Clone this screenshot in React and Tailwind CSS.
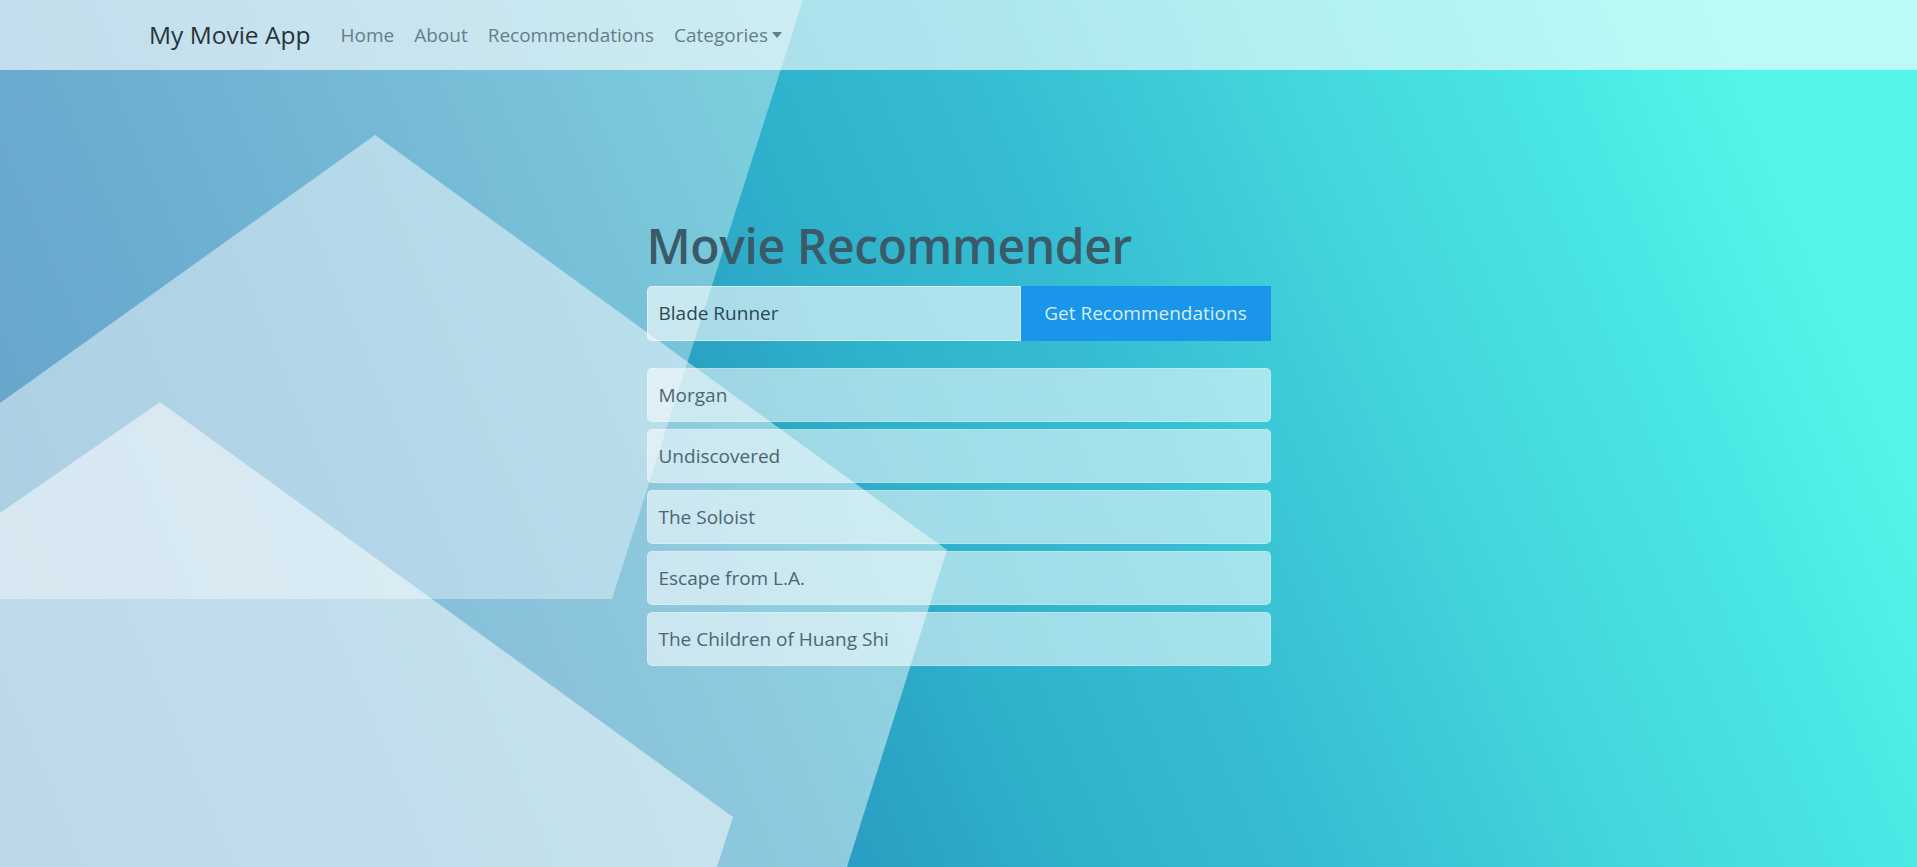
export default function App() {
  const items = [
    "Morgan",
    "Undiscovered",
    "The Soloist",
    "Escape from L.A.",
    "The Children of Huang Shi",
  ];
  return (
    <div className="relative min-h-[867px] w-full overflow-hidden font-['Open_Sans',sans-serif] bg-[linear-gradient(67deg,#0a6aa8_0%,#147db4_17%,#2997bf_34%,#2fb3cc_48%,#35bcd2_57%,#44d8dc_72%,#4ae8e4_83%,#55f5ea_91%,#55f5ea_100%)]">
      <svg
        className="absolute inset-0 h-full w-full"
        viewBox="0 0 1917 867"
        preserveAspectRatio="none"
        aria-hidden="true"
      >
        <polygon points="0,0 803,0 612,599 0,599" fill="#fff" fillOpacity="0.37" />
        <polygon points="375,135 947,550 847,867 0,867 0,403" fill="#fff" fillOpacity="0.47" />
        <polygon points="160,402 733,817 717,867 0,867 0,513" fill="#fff" fillOpacity="0.5" />
      </svg>

      <nav className="relative flex h-[70px] items-center bg-white/60 pl-[149px]">
        <span className="mr-[20px] text-[24.5px] leading-none text-[#27343b]">My Movie App</span>
        <div className="flex items-center text-[19px] text-[#667d88]">
          <span className="px-[10px]">Home</span>
          <span className="px-[10px]">About</span>
          <span className="px-[10px]">Recommendations</span>
          <span className="flex items-center px-[10px]">
            Categories
            <span className="ml-[4px] inline-block h-0 w-0 border-x-[5px] border-t-[6px] border-x-transparent border-t-[#667d88]" />
          </span>
        </div>
      </nav>

      <main className="relative mx-auto flex w-[624px] flex-col pt-[147px]">
        <h1 className="mb-[11px] text-[48px] font-semibold leading-[58px] tracking-[-0.4px] text-[#3b5a68]">
          Movie Recommender
        </h1>
        <div className="flex h-[55px]">
          <div className="flex flex-1 items-center rounded-l-[5px] border border-white/40 bg-white/60 px-[11px] text-[19px] text-[#2c4753]">
            Blade Runner
          </div>
          <button className="w-[250px] bg-[#1995e9] text-[19px] text-[#d6edf8]">
            Get Recommendations
          </button>
        </div>
        <ul className="mt-[27px] flex flex-col gap-[7px]">
          {items.map((t) => (
            <li
              key={t}
              className="flex h-[54px] items-center rounded-[5px] border border-white/20 bg-white/55 px-[11px] text-[19px] text-[#4b6672]"
            >
              {t}
            </li>
          ))}
        </ul>
      </main>
    </div>
  );
}
